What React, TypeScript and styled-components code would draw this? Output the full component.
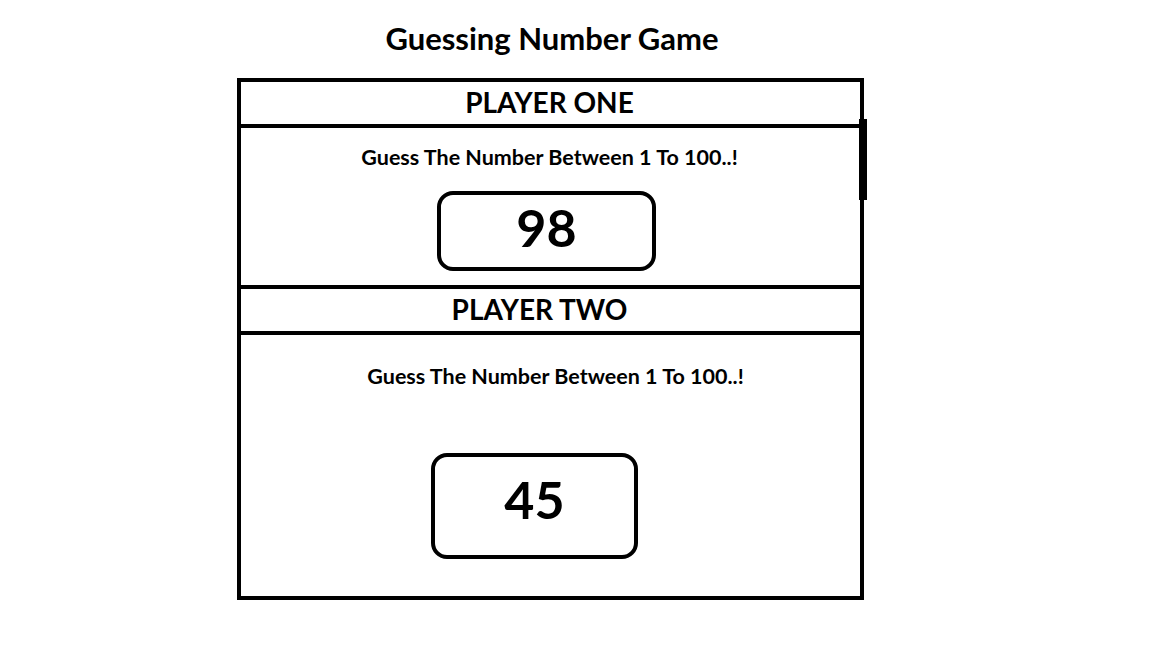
import React from "react";
import styled, { createGlobalStyle } from "styled-components";

const GlobalStyle = createGlobalStyle`
  html, body {
    margin: 0;
    padding: 0;
    background: #ffffff;
  }
  body {
    font-family: "Lato", "Open Sans", "Liberation Sans", sans-serif;
    color: #000000;
  }
`;

const Page = styled.div`
  width: 1152px;
  height: 648px;
  box-sizing: border-box;
  padding: 19px 0 0 237px;
  display: flex;
  flex-direction: column;
`;

const Column = styled.div`
  width: 627px;
  display: flex;
  flex-direction: column;
`;

const Title = styled.h1`
  margin: 0 0 0 3px;
  height: 59px;
  font-size: 31px;
  font-weight: 700;
  line-height: 38px;
  text-align: center;
`;

const Frame = styled.div`
  position: relative;
  width: 627px;
  height: 522px;
  box-sizing: border-box;
  border: 4px solid #000;
  display: flex;
  flex-direction: column;
`;

const EdgeMark = styled.div`
  position: absolute;
  right: -7px;
  top: 37px;
  width: 8px;
  height: 81px;
  background: #000;
`;

const Header = styled.div<{ $shift: number }>`
  height: 46px;
  box-sizing: border-box;
  display: flex;
  align-items: center;
  justify-content: center;
  font-size: 28px;
  font-weight: 700;
  border-bottom: 4px solid #000;
  & > span {
    transform: translate(${(p) => p.$shift}px, -1px);
  }
`;

const Section = styled.div<{ $height: number; $last?: boolean }>`
  height: ${(p) => p.$height}px;
  box-sizing: border-box;
  border-bottom: ${(p) => (p.$last ? "none" : "4px solid #000")};
  display: flex;
  flex-direction: column;
  align-items: flex-start;
`;

const Prompt = styled.p<{ $top: number; $shift: number }>`
  margin: ${(p) => p.$top}px 0 0 0;
  width: 100%;
  text-align: center;
  font-size: 21.5px;
  font-weight: 700;
  line-height: 24px;
  white-space: nowrap;
  transform: translateX(${(p) => p.$shift}px);
`;

const NumberBox = styled.div<{ $top: number; $left: number; $w: number; $h: number; $lift: number }>`
  margin: ${(p) => p.$top}px 0 0 ${(p) => p.$left}px;
  width: ${(p) => p.$w}px;
  height: ${(p) => p.$h}px;
  box-sizing: border-box;
  border: 4px solid #000;
  border-radius: 16px;
  display: flex;
  align-items: center;
  justify-content: center;
  font-size: 52px;
  font-weight: 700;
  line-height: 1;
  & > span {
    transform: translateY(-${(p) => p.$lift}px);
  }
`;

export default function App() {
  return (
    <>
      <GlobalStyle />
      <Page>
        <Column>
          <Title>Guessing Number Game</Title>
          <Frame>
            <EdgeMark />
            <Header $shift={-1}>
              <span>PLAYER ONE</span>
            </Header>
            <Section $height={161}>
              <Prompt $top={17} $shift={-1}>
                Guess The Number Between 1 To 100..!
              </Prompt>
              <NumberBox $top={22} $left={196} $w={219} $h={80} $lift={4}>
                <span>98</span>
              </NumberBox>
            </Section>
            <Header $shift={-11}>
              <span>PLAYER TWO</span>
            </Header>
            <Section $height={261} $last>
              <Prompt $top={29} $shift={5}>
                Guess The Number Between 1 To 100..!
              </Prompt>
              <NumberBox $top={65} $left={190} $w={207} $h={106} $lift={7}>
                <span>45</span>
              </NumberBox>
            </Section>
          </Frame>
        </Column>
      </Page>
    </>
  );
}
